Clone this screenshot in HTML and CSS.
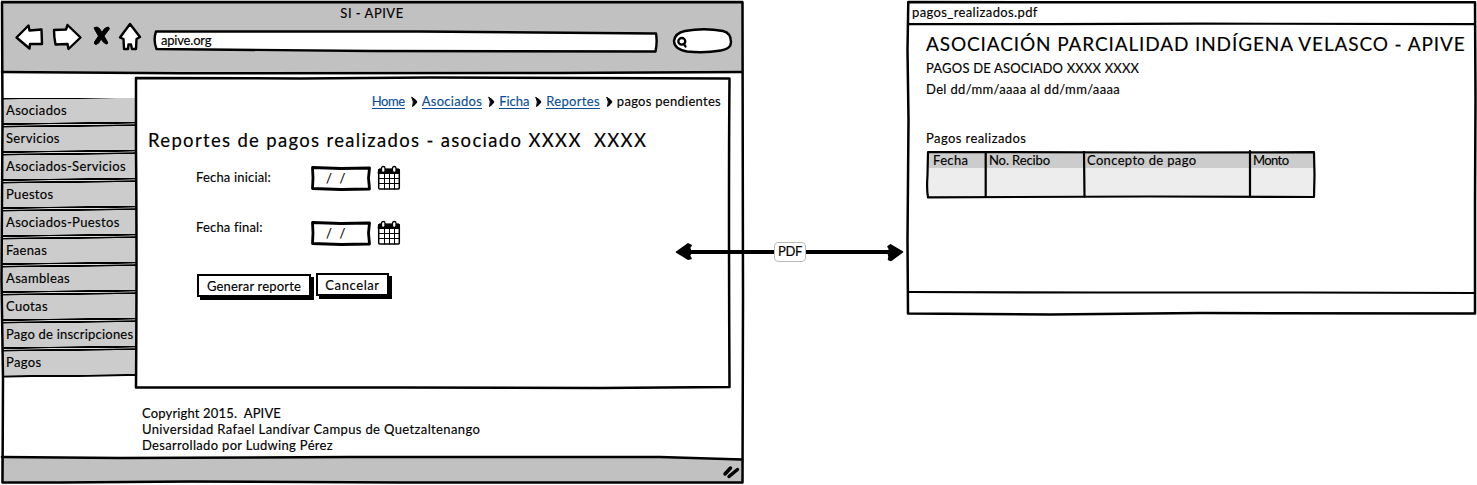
FILE: index.html
```html
<!DOCTYPE html>
<html lang="es">
<head>
<meta charset="utf-8">
<title>SI - APIVE</title>
<link rel="stylesheet" href="styles.css">
</head>
<body>
<div class="board">
  <section class="browser">
    <header class="chrome">
      <h1 class="window-title">SI - APIVE</h1>
      <div class="toolbar">
        <svg class="nav-icon back" width="30" height="30" viewBox="15 22 30 30"><path d="M16.500 37.500L28.500 25.500L29.500 30.500L41.500 29.500L42 44L30 44L29.500 48.500Z"/></svg>
        <svg class="nav-icon forward" width="32" height="30" viewBox="52 22 32 30"><path d="M54 30L66 29.500L67.500 25L80.500 37.500L68.500 49L67.500 44L55.500 44.500Q54 37 54 30Z"/></svg>
        <svg class="nav-icon stop" width="20" height="30" viewBox="92 22 20 30"><path class="solid" d="M94.500 27.500Q97 26 99.500 28.500L102 32.500Q104 27.500 108 27Q110 27.500 109 29.500L104 36L107.500 42Q108 44.500 106 44Q103 42.500 101 39Q99 44 96 44.500Q94 44.500 94.500 42L98.500 36L95 30Z"/></svg>
        <svg class="nav-icon home" width="24" height="30" viewBox="118 22 24 30"><path d="M130 24L140 37L136.500 39L136 49L132 49L131 44.500L128.500 44.500L128 49L124 49L123.500 39L120 37.500Z"/></svg>
        <div class="address">
          <svg class="sketch" viewBox="153 29 507 25"><path class="paper" d="M156 31.500L420 31.500L656 33.500Q657.500 42 655.500 51.500L370 51L156.500 49Q153 40 156 31.500Z"/></svg>
          <span class="address-text">apive.org</span>
        </div>
        <svg class="search" width="62" height="27" viewBox="672 27 62 27"><path class="paper" d="M685 31Q704 27.500 723 31Q731 33 731 42Q731 49 721 50.500Q704 53.500 687 51.500Q674 49 674 41Q675 33 685 31Z"/><ellipse class="lens" cx="681.800" cy="41.300" rx="3.500" ry="3.300"/><path class="lens" d="M684 44L685.500 46.500"/></svg>
      </div>
    </header>
    <div class="content">
      <nav class="menu">
        <a class="item">Asociados</a>
        <a class="item">Servicios</a>
        <a class="item">Asociados-Servicios</a>
        <a class="item">Puestos</a>
        <a class="item">Asociados-Puestos</a>
        <a class="item">Faenas</a>
        <a class="item">Asambleas</a>
        <a class="item">Cuotas</a>
        <a class="item tight">Pago de inscripciones</a>
        <a class="item">Pagos</a>
      </nav>
      <div class="column">
        <main class="page">
          <svg class="sketch" viewBox="134 76 598 314"><path class="line" d="M136 78L300 78.500L430 77.500L729.500 78.500Q728.500 190 729.500 387L600 388L400 387.500L136 387.500Q137 260 136 150Z"/></svg>
          <nav class="crumbs">
            <a class="home-link">Home</a><svg class="chev" viewBox="0 0 8 12"><path d="M1 1.500Q5 3.500 6 6Q4 9 1.500 10.500Q3.500 6 1 1.500Z"/></svg>
            <a>Asociados</a><svg class="chev" viewBox="0 0 8 12"><path d="M1 1.500Q5 3.500 6 6Q4 9 1.500 10.500Q3.500 6 1 1.500Z"/></svg>
            <a class="ficha-link">Ficha</a><svg class="chev" viewBox="0 0 8 12"><path d="M1 1.500Q5 3.500 6 6Q4 9 1.500 10.500Q3.500 6 1 1.500Z"/></svg>
            <a>Reportes</a><svg class="chev" viewBox="0 0 8 12"><path d="M1 1.500Q5 3.500 6 6Q4 9 1.500 10.500Q3.500 6 1 1.500Z"/></svg>
            <span>pagos pendientes</span>
          </nav>
          <h2 class="page-title">Reportes de pagos realizados - asociado XXXX&nbsp; XXXX</h2>
          <div class="field">
            <label>Fecha inicial:</label>
            <div class="date"><svg class="sketch" viewBox="0 0 60 25"><path class="paper thick" d="M1.500 1.500L30 2.500L58.500 2L57.500 12L58.500 23L30 23.500L1.500 22.500Q2.500 12 1.500 1.500Z"/></svg><span>/&nbsp; /</span></div>
            <svg class="calendar" viewBox="0 0 24 26"><rect class="paper thin" x="1.700" y="4.500" width="20.600" height="19.500" rx="1"/><path class="solid" d="M1.500 5Q1.500 4 2 4H22Q22.500 4 22.500 5V8.500H1.500Z"/><path class="grid" d="M7.500 9V24M12.500 9V24M17.500 9V24M2 13.500H22M2 18.500H22"/><rect class="ring" x="4.500" y="1.500" width="3.500" height="6" rx="1.700"/><rect class="ring" x="15.500" y="1.500" width="3.500" height="6" rx="1.700"/></svg>
          </div>
          <div class="field second">
            <label>Fecha final:</label>
            <div class="date"><svg class="sketch" viewBox="0 0 60 25"><path class="paper thick" d="M1.500 1.500L30 2.500L58.500 2L57.500 12L58.500 23L30 23.500L1.500 22.500Q2.500 12 1.500 1.500Z"/></svg><span>/&nbsp; /</span></div>
            <svg class="calendar" viewBox="0 0 24 26"><rect class="paper thin" x="1.700" y="4.500" width="20.600" height="19.500" rx="1"/><path class="solid" d="M1.500 5Q1.500 4 2 4H22Q22.500 4 22.500 5V8.500H1.500Z"/><path class="grid" d="M7.500 9V24M12.500 9V24M17.500 9V24M2 13.500H22M2 18.500H22"/><rect class="ring" x="4.500" y="1.500" width="3.500" height="6" rx="1.700"/><rect class="ring" x="15.500" y="1.500" width="3.500" height="6" rx="1.700"/></svg>
          </div>
          <div class="actions">
            <button class="btn generate">Generar reporte</button>
            <button class="btn cancel">Cancelar</button>
          </div>
        </main>
        <div class="credits">
          <p class="copy">Copyright 2015.&nbsp; APIVE</p>
          <p class="univ">Universidad Rafael Landívar Campus de Quetzaltenango</p>
          <p class="author">Desarrollado por Ludwing Pérez</p>
        </div>
      </div>
    </div>
    <footer class="status"></footer>
    <svg class="sketch frame" viewBox="0 0 744 485"><path class="line" d="M2 2.200H742.500L743 300L742.500 482.500L400 482.500L190 481.500L60 482.500H2.500L3 380L1.500 280L2.500 120Z"/><path class="line" d="M2 72L180 73.300L560 73L742 72M2 457L120 458L350 457L660 457L742 459.500"/><path class="grip" d="M725 474L730.500 468M729 476.500L737.500 469.500"/></svg>
  </section>

  <section class="pdf">
    <svg class="sketch frame" viewBox="906 0 571 316"><path class="line" d="M908.300 2L1100 2.300L1475 2.200L1475.500 100L1475 200L1475 313.500L1200 313L1050 314.500L908 313.500L907.500 240L908.500 120L907.500 50Z"/><path class="line slim" d="M908 24.200L1050 24.200L1200 23.600L1475 24.200M908 292L1100 292.500L1300 292.500L1475 293"/></svg>
    <header class="pdf-bar">pagos_realizados.pdf</header>
    <div class="pdf-body">
      <h2 class="pdf-title">ASOCIACIÓN PARCIALIDAD INDÍGENA VELASCO - APIVE</h2>
      <p class="pdf-sub">PAGOS DE ASOCIADO XXXX XXXX</p>
      <p class="pdf-range">Del dd/mm/aaaa al dd/mm/aaaa</p>
      <p class="pdf-caption">Pagos realizados</p>
      <div class="table">
        <span>Fecha</span><span class="recibo">No. Recibo</span><span>Concepto de pago</span><span class="monto">Monto</span>
        <svg class="sketch" viewBox="925 150 392 49"><path class="line slim" d="M928 152L1150 152.500L1314 152.200L1314.500 175L1314 197L1150 196.500L928 197.300Q926.500 190 927.500 175ZM985.700 152V197M1084 152L1084.500 197M1250 151V197"/></svg>
      </div>
    </div>
  </section>

  <div class="link">
    <svg class="link-arrow" viewBox="674 240 232 24"><path class="shaft" d="M685 252H894"/><path class="solid" d="M676.500 252L688 243.800L691.200 245.500L689.500 247.500L691 252L689.500 256L691 258.500L688 259.200ZM902.500 252L890.500 244.800L888 246.500L889.500 249L888 252L889 256.500L888.500 259.500L891 260.500Z"/></svg>
    <span class="link-label">PDF</span>
  </div>
</div>
</body>
</html>
```

FILE: styles.css
```css
* { box-sizing: border-box; margin: 0; padding: 0; }
body {
  background: #fff;
  color: #000;
  font: 400 13px/16px Lato, "Open Sans", sans-serif;
  letter-spacing: .34px;
  -webkit-text-stroke: .15px currentColor;
}
h1, h2 { font-weight: 400; }
.board { position: relative; display: flex; align-items: flex-start; width: 1477px; height: 485px; overflow: hidden; }

svg { display: block; overflow: visible; flex: none; fill: none; stroke: #000; stroke-width: 2; stroke-linejoin: round; stroke-linecap: round; }
.sketch { position: absolute; inset: 0; width: 100%; height: 100%; pointer-events: none; }
.line { stroke-width: 2.5; }
.slim { stroke-width: 2.2; }
.paper { fill: #fff; stroke-width: 2.4; }
.thick { stroke-width: 2.8; }
.thin { stroke-width: 1.5; }
.solid { fill: #000; stroke-width: 1; }

/* Browser window */
.browser { position: relative; display: flex; flex-direction: column; width: 744px; height: 485px; }
.chrome { height: 72px; margin: 0 1px; padding-top: 5px; background: #c1c1c1; }
.window-title { font-size: 13px; line-height: 16px; text-align: center; letter-spacing: .5px; }
.toolbar { display: flex; padding: 1px 0 0 14px; }
.nav-icon { fill: #fff; stroke-width: 2.4; }
.stop { margin-left: 8px; }
.forward { margin-left: 7px; }
.home { margin-left: 6px; }
.address { position: relative; width: 507px; height: 25px; margin: 7px 0 0 11px; padding: 3px 8px; }
.address-text { position: relative; letter-spacing: -.2px; }
.search { margin: 5px 0 0 12px; }
.lens { stroke-width: 2.3; }

.content { display: flex; height: 386px; }
.menu { width: 136px; padding: 26px 0 0 2px; }
.item {
  display: block; height: 28px; padding: 4px 0 0 4px; white-space: nowrap;
  background: linear-gradient(179.4deg, #000 0 1.3px, #ccc 1.7px 25px, #000 25.400px 26.700px, #ddd 27px 27.500px, #000 28px);
}
.tight { letter-spacing: .22px; }
.item:last-child { background: linear-gradient(179.4deg, #000 0 1.3px, #ccc 1.7px 25.400px, #000 25.800px 27.300px, #fff 27.800px); }
.column { padding: 4px 0 0; margin-left: -2px; }
.page { position: relative; width: 598px; height: 314px; padding: 17px 11px 0 14px; }
.crumbs { display: flex; justify-content: flex-end; height: 16px; }
.crumbs a { height: 16px; color: #0c4f97; border-bottom: 1px solid #0c4f97; letter-spacing: .3px; }
.crumbs .home-link { letter-spacing: -.45px; }
.crumbs .ficha-link { letter-spacing: -.05px; }
.crumbs span { letter-spacing: .28px; }
.chev { width: 8px; height: 12px; margin: 3px 3px 0 6px; fill: #000; stroke-width: 1; }
.page-title { margin-top: 19px; font-size: 18.500px; line-height: 24px; letter-spacing: 1.33px; white-space: nowrap; }
.field { display: flex; height: 25px; margin: 14px 0 0 48px; }
.field.second { margin-top: 30px; }
.field label { width: 115px; padding-top: 3px; letter-spacing: .18px; }
.field.second label { padding-top: 0; margin-top: -2px; }
.date { position: relative; width: 60px; height: 25px; padding: 4px 0 0 15px; }
.date span { position: relative; white-space: pre; letter-spacing: .3px; }
.calendar { width: 24px; height: 26px; margin: -1px 0 0 6px; }
.grid { stroke-width: 1; }
.ring { fill: #fff; stroke-width: 1.3; }
.actions { display: flex; margin: 27px 0 0 49px; gap: 6px; }
.btn {
  height: 23px; border: 2px solid #000; background: #fff; color: #000; box-shadow: 3px 3px 0 #000;
  font: inherit; white-space: nowrap; -webkit-text-stroke: inherit;
}
.generate { width: 114px; margin-top: 1px; letter-spacing: .18px; }
.cancel { width: 73px; margin-left: -1px; letter-spacing: .6px; }
.credits { padding: 15px 0 0 8px; letter-spacing: .37px; }
.copy { letter-spacing: .16px; }
.author { letter-spacing: .32px; }
.status { flex: 1; margin: 0 1px 2px; background: #c1c1c1; }
.grip { stroke-width: 3.5; }

/* PDF document */
.pdf { position: relative; width: 571px; height: 316px; margin-left: 162px; }
.pdf-bar { height: 24px; padding: 4px 6px; letter-spacing: .38px; }
.pdf-body { padding: 8px 0 0 20px; }
.pdf-title { font-size: 19px; line-height: 24px; letter-spacing: .88px; white-space: nowrap; }
.pdf-sub { margin-top: 4px; letter-spacing: .19px; }
.pdf-range { margin-top: 5px; }
.pdf-caption { margin-top: 33px; letter-spacing: .42px; }
.table {
  position: relative; display: grid; grid-template-columns: 56px 98px 166px 64px;
  width: 392px; height: 49px; margin: 4px 0 0 -1px; padding: 2px 4px 0;
  background: linear-gradient(#ccc 0 16px, #ededed 16px) no-repeat 2px 2px / 387px 45px;
}
.table span { padding-left: 4px; white-space: nowrap; }
.table .recibo { letter-spacing: -.1px; }
.table .monto { letter-spacing: -.6px; }

/* Connector between the windows */
.link { position: absolute; left: 674px; top: 240px; width: 232px; height: 24px; display: flex; justify-content: center; align-items: center; }
.link-arrow { position: absolute; inset: 0; width: 232px; height: 24px; }
.link-arrow .solid { stroke-width: 1.5; }
.shaft { stroke-width: 3.8; }
.link-label {
  position: relative; width: 32px; height: 20px; border: 1px solid #bbb; border-radius: 4px; background: #fff;
  line-height: 16px; text-align: center; letter-spacing: -.3px;
}
```
